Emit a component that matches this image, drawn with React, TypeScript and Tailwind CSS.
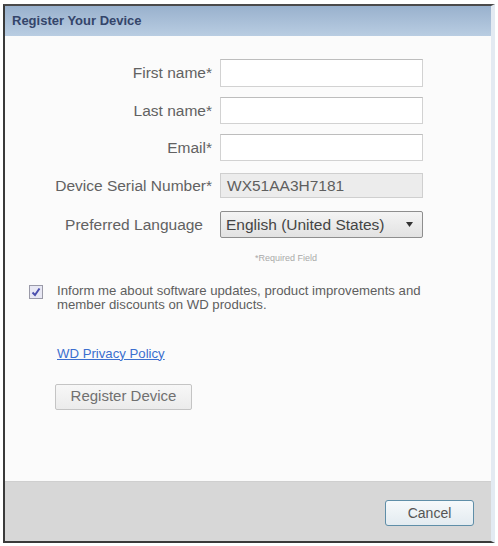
import React from "react";

const sans = { fontFamily: '"Liberation Sans", Arial, sans-serif' };

function Field({
  label,
  children,
  labelClass = "",
  className = "",
}: {
  label: string;
  children: React.ReactNode;
  labelClass?: string;
  className?: string;
}) {
  return (
    <div className={`flex items-center ${className}`}>
      <div className={`w-[207px] shrink-0 text-right text-[15.5px] leading-none text-[#626262] ${labelClass}`}>
        {label}
      </div>
      <div className="ml-[8px]">{children}</div>
    </div>
  );
}

export default function App() {
  return (
    <div className="w-[498px] h-[546px] bg-white pt-[4px] pl-[3px] pr-[3px]" style={sans}>
      <div className="flex h-[539px] flex-col border-t-2 border-l-2 border-b-2 border-t-[#4a4a4a] border-l-[#3a3a3a] border-b-[#3a3a3a] border-r-[4px] border-r-[#e3eaf2]">
        {/* title bar */}
        <div className="flex h-[30px] shrink-0 items-center bg-gradient-to-b from-[#99b1cd] to-[#b9cde2] pl-[7px]">
          <span className="text-[13px] font-bold text-[#34456a]">Register Your Device</span>
        </div>

        {/* form body */}
        <div className="flex flex-1 flex-col bg-[#fbfbfb] pt-[23px]">
          <Field label="First name*">
            <div className="h-[28px] w-[203px] border border-[#d2d2d2] border-t-[#bdbdbd] bg-white" />
          </Field>
          <Field label="Last name*" className="mt-[10px]">
            <div className="h-[27px] w-[203px] border border-[#d2d2d2] border-t-[#bdbdbd] bg-white" />
          </Field>
          <Field label="Email*" className="mt-[10px]">
            <div className="h-[27px] w-[203px] border border-[#d2d2d2] border-t-[#bdbdbd] bg-white" />
          </Field>
          <Field label="Device Serial Number*" className="mt-[12px]" labelClass="text-[#6e6e6e]">
            <div className="flex h-[25px] w-[203px] items-center border border-[#cfcfcf] bg-[#ececec] pl-[6px] text-[15.5px] text-[#5e5e5e]">
              WX51AA3H7181
            </div>
          </Field>
          <Field label="Preferred Language" className="mt-[13px]" labelClass="pr-[9px] text-[#5e5e5e]">
            <div className="flex h-[27px] w-[203px] items-center justify-between rounded-[2px] border border-[#8e8e8e] bg-gradient-to-b from-[#f4f4f4] to-[#e2e2e2] pl-[5px] pr-[9px] text-[15.5px] text-[#444]">
              <span>English (United States)</span>
              <svg width="7" height="5" viewBox="0 0 7 5">
                <path d="M0 0 L7 0 L3.5 5 Z" fill="#333" />
              </svg>
            </div>
          </Field>
          <div className="mt-[14px] pl-[250px] text-[9px] text-[#a9a9a9]">*Required Field</div>

          <div className="mt-[18px] flex items-start pl-[24px]">
            <div className="mt-[1px] flex h-[14px] w-[14px] items-center justify-center border border-[#9a9aa8] bg-[#e8e8f4]">
              <svg width="10" height="10" viewBox="0 0 10 10">
                <path d="M1.5 5.5 L4 8 L8.5 1.5" stroke="#4b4fae" strokeWidth="2" fill="none" />
              </svg>
            </div>
            <p className="ml-[14px] text-[13.2px] leading-[14px] text-[#5e5e5e]">
              Inform me about software updates, product improvements and
              <br />
              member discounts on WD products.
            </p>
          </div>

          <div className="mt-[29px] pl-[52px]">
            <span className="text-[13.2px] text-[#3c6fcf] underline">WD Privacy Policy</span>
          </div>

          <div className="mt-[19px] pl-[50px]">
            <div className="flex h-[26px] w-[137px] items-center justify-center rounded-[2px] border border-[#c4c4c4] bg-gradient-to-b from-[#f7f7f7] to-[#ebebeb] text-[15px] text-[#707070]">
              Register Device
            </div>
          </div>
        </div>

        {/* footer */}
        <div className="flex h-[60px] shrink-0 items-start justify-end border-t border-t-[#cfcfcf] bg-[#d7d7d7] pr-[17px] pt-[18px]">
          <div className="flex h-[26px] w-[89px] items-center justify-center rounded-[3px] border border-[#5f8ea8] bg-gradient-to-b from-[#f6f9fb] to-[#e3ebf0] text-[14px] text-[#555]">
            Cancel
          </div>
        </div>
      </div>
    </div>
  );
}
